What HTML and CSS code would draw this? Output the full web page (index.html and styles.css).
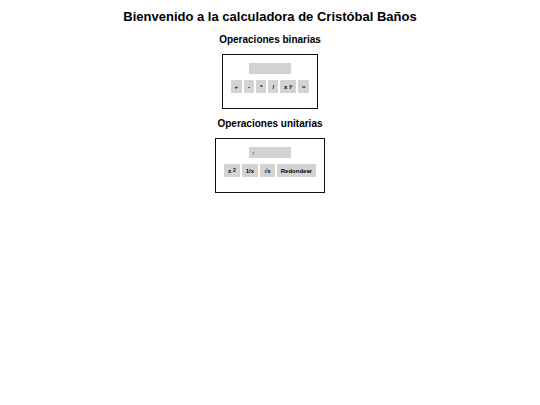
FILE: index.html
```html
<!DOCTYPE html>
<html lang="es">
<head>
    <meta charset="UTF-8">
    <meta name="viewport" content="width=device-width, initial-scale=1.0">
    <title>Calculadora</title>
    <link rel="stylesheet" href="styles.css">
</head>
<body>
    <h1>Bienvenido a la calculadora de Cristóbal Baños</h1>

    <h2>Operaciones binarias</h2>
    <div class="calculadora">
        <input type="text" id="binaria" aria-label="Operaciones binarias">
        <div class="botones">
            <button type="button">+</button>
            <button type="button">-</button>
            <button type="button">*</button>
            <button type="button">/</button>
            <button type="button">x <sup>y</sup></button>
            <button type="button">=</button>
        </div>
    </div>

    <h2>Operaciones unitarias</h2>
    <div class="calculadora">
        <input type="text" id="unitaria" placeholder="x" aria-label="Operaciones unitarias">
        <div class="botones">
            <button type="button">x <sup>2</sup></button>
            <button type="button">1/x</button>
            <button type="button">√x</button>
            <button type="button">Redondear</button>
        </div>
    </div>
</body>
</html>
```

FILE: styles.css
```css
body {
    font-family: "Liberation Sans", Arial, sans-serif;
    margin: 0;
    padding: 9px;
    display: flex;
    flex-direction: column;
    align-items: center;
    background-color: #fff;
    color: #000;
}
h1 {
    margin: 0;
    font-size: 13px;
    line-height: 16px;
}
h2 {
    margin: 8px 0 7px;
    font-size: 10px;
    line-height: 14px;
}
.calculadora {
    display: flex;
    flex-direction: column;
    align-items: center;
    gap: 6px;
    padding: 8px 8px 15px;
    border: 1px solid #111;
}
.calculadora input {
    box-sizing: border-box;
    width: 42px;
    height: 11px;
    padding: 0 3px;
    border: none;
    background-color: lightgray;
    font-family: inherit;
    font-size: 5px;
}
.calculadora input::placeholder {
    color: #757575;
}
.botones {
    display: flex;
    gap: 2px;
}
.botones button {
    height: 13px;
    padding: 0 4px;
    border: none;
    background-color: lightgray;
    color: #000;
    font-family: inherit;
    font-size: 6px;
    font-weight: bold;
    line-height: 8px;
}
.botones sup {
    font-size: 5px;
    line-height: 0;
    vertical-align: 1px;
}
```
